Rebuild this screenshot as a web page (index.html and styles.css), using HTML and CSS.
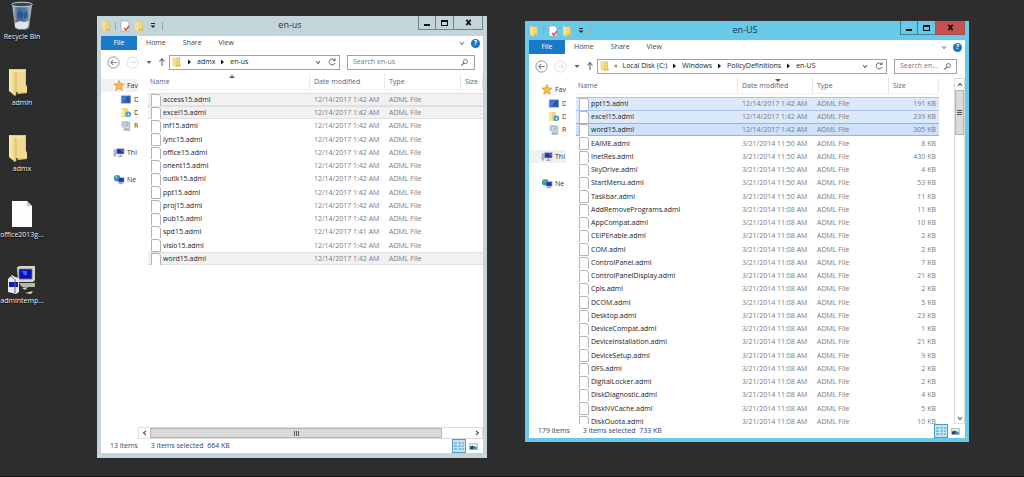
FILE: index.html
```
<!DOCTYPE html>
<html lang="en">
<head>
<meta charset="utf-8">
<title>Desktop</title>
<link rel="stylesheet" href="styles.css">
</head>
<body>
<svg class="defs" aria-hidden="true">
  <defs>
    <linearGradient id="gold" x1="0" x2="1"><stop offset="0" stop-color="#fbeeb0"/><stop offset="1" stop-color="#ecd07a"/></linearGradient>
    <linearGradient id="glass" x1="0" x2="1"><stop offset="0" stop-color="#b9c6d2"/><stop offset=".3" stop-color="#4f6680"/><stop offset=".7" stop-color="#5f7993"/><stop offset="1" stop-color="#c3ced8"/></linearGradient>
  </defs>
  <symbol id="folder" viewBox="0 0 10 12"><path d="M1 1l4 1v9l-1 .5-3-2z" fill="#f7e08c"/><path d="M5 1.500h3.500V8H9v2.500H4.500z" fill="#dfb94d"/><path d="M5 2h3v7H5z" fill="#efd77e"/></symbol>
  <symbol id="bigfolder" viewBox="0 0 20 28"><path d="M1 1h17v16l1 1v7l-9 1z" fill="#e3c978"/><path d="M3 2h14v16H3z" fill="#f6e4a4"/><path d="M1 1l7 3v23l-1 1-6-5z" fill="url(#gold)"/><path d="M8 5l9-2v15l2 1v5H8z" fill="#f0da92"/><path d="M8 4v23" stroke="#c9a755" stroke-width=".7"/></symbol>
  <symbol id="props" viewBox="0 0 10 12"><path d="M1 1h6l2 2v8H1z" fill="#fff" stroke="#97a3b0" stroke-width=".7"/><path d="M4 8l2 2 3-4" stroke="#d5543f" stroke-width="1.500" fill="none"/></symbol>
  <symbol id="star" viewBox="0 0 12 12"><path d="M6 .5l1.600 3.700 4 .3-3 2.700.9 4L6 9.100l-3.500 2.100.9-4-3-2.700 4-.3z" fill="#fbbd45" stroke="#dc8420" stroke-width=".7"/></symbol>
  <symbol id="screen" viewBox="0 0 12 12"><path d="M1 2h10v8H1z" fill="#2859b0" stroke="#7d93b5" stroke-width=".7"/><path d="M1.500 2.500h6l-4 7h-2z" fill="#3f77cf"/></symbol>
  <symbol id="down" viewBox="0 0 12 12"><path d="M1 1h7v10H1z" fill="#f0d470"/><path d="M1 1l3 1v9l-3-1z" fill="#fbe9a0"/><circle cx="8.500" cy="8" r="3" fill="#2f94cf"/><path d="M8.500 6v3M7 8l1.500 1.500L10 8" stroke="#fff" fill="none" stroke-width=".8"/></symbol>
  <symbol id="recent" viewBox="0 0 12 12"><path d="M1 1h8v2H3v3h6v5H4V8H1z" fill="#c2d2db"/><path d="M3 3h7v6H4z" fill="#e8eef1" stroke="#8298a5" stroke-width=".7"/><path d="M5 4.500h4M5 6.500h4M3 11h8" stroke="#71899a" stroke-width=".9"/></symbol>
  <symbol id="pc" viewBox="0 0 12 12"><path d="M.5 3h2v7h-2z" fill="#bcc6cc" stroke="#7a8790" stroke-width=".5"/><path d="M3.500 2h8v5.500h-8z" fill="#252cae" stroke="#8b9abd" stroke-width=".7"/><path d="M7 3h4v3z" fill="#6775e3"/><path d="M7 8h1v1.500h2v1H5v-1h2z" fill="#8796a5"/></symbol>
  <symbol id="net" viewBox="0 0 12 12"><circle cx="4" cy="4.500" r="3.500" fill="#2a92a9"/><path d="M2 2l3-1-1 3-2 2z" fill="#62c46a"/><path d="M5 4h6.500v5H5z" fill="#2633b9" stroke="#9aa8da" stroke-width=".7"/><path d="M6 10.500h4" stroke="#77859a"/></symbol>
  <symbol id="back" viewBox="0 0 14 14"><circle cx="7" cy="7" r="6" fill="#fff" stroke="currentColor"/><path d="M10.500 7H4M6.500 4.500L4 7l2.500 2.500" fill="none" stroke="currentColor" stroke-width="1.200"/></symbol>
  <symbol id="fwd" viewBox="0 0 14 14"><circle cx="7" cy="7" r="6" fill="#fff" stroke="currentColor"/><path d="M3.500 7H10M7.500 4.500L10 7 7.500 9.500" fill="none" stroke="currentColor"/></symbol>
  <symbol id="chev" viewBox="0 0 8 8"><path d="M2 3l2 2.500L6 3" fill="none" stroke="currentColor" stroke-width="1.100"/></symbol>
  <symbol id="tri" viewBox="0 0 8 8"><path d="M1.500 3h5L4 6z" fill="currentColor"/></symbol>
  <symbol id="sortmark" viewBox="0 0 6 3"><path d="M0 0h6L3 3z" fill="currentColor"/></symbol>
  <symbol id="qat" viewBox="0 0 8 8"><path d="M2 1.500h4" stroke="currentColor"/><path d="M1.500 3.500h5L4 6z" fill="currentColor"/></symbol>
  <symbol id="right" viewBox="0 0 8 8"><path d="M3 1.500v5L6 4z" fill="currentColor"/></symbol>
  <symbol id="up" viewBox="0 0 8 10"><path d="M4 9V2M1.500 4.500L4 1.500l2.500 3" fill="none" stroke="currentColor" stroke-width="1.100"/></symbol>
  <symbol id="reload" viewBox="0 0 10 10"><path d="M7.500 3A3 3 0 1 0 8 6" fill="none" stroke="currentColor"/><path d="M8.500 1v3h-3z" fill="currentColor"/></symbol>
  <symbol id="lens" viewBox="0 0 10 10"><circle cx="6" cy="4" r="2.300" fill="none" stroke="currentColor"/><path d="M4.500 5.500L1.500 8.500" stroke="currentColor" stroke-width="1.200"/></symbol>
  <symbol id="details" viewBox="0 0 12 12"><path d="M1 3h3M1 6h3M1 9h3M5.500 3H8M9 3h2M5.500 6H8M9 6h2M5.500 9H8M9 9h2" stroke="#4389b5" stroke-width=".9"/></symbol>
  <symbol id="thumbs" viewBox="0 0 10 8"><path d="M.5.5h9v7h-9z" fill="#d9eff5" stroke="#86a2ad" stroke-width=".7"/><path d="M1 4l3-1 5 2v2H1z" fill="#214c66"/><path d="M5 5h4v2H5z" fill="#58a7ad"/></symbol>
</svg>

<main class="desktop">
  <ul class="shortcuts">
    <li><svg viewBox="0 0 24 30"><path d="M2 3h20l-3 24-3 2H8l-3-2z" fill="url(#glass)"/><ellipse cx="12" cy="3.500" rx="10.500" ry="2.300" fill="#34465a" stroke="#c5d0d9"/><path d="M7 12l4-3 3 4-2 5-5-2zM14 12l3-2 1 6-4 2z" fill="#245a9c"/><path d="M5 22l5-2 4 1 5-1-1 6-3 2H8l-3-2z" fill="#dfe5ea"/></svg><span>Recycle Bin</span></li>
    <li><svg class="shifted"><use href="#bigfolder"/></svg><span>admin</span></li>
    <li><svg class="shifted"><use href="#bigfolder"/></svg><span>admx</span></li>
    <li><svg viewBox="0 0 24 30"><path d="M2 2h15l5 5v21H2z" fill="#fdfdfd"/><path d="M17 2v5h5z" fill="#c9c9c9"/></svg><span>office2013g...</span></li>
    <li><svg class="wide" viewBox="0 0 30 30"><path d="M10 2l3-1h15v14l-2 2H11z" fill="#d8d5c5"/><path d="M12 4h13v10H12z" fill="#0a12b5" stroke="#777" stroke-width=".8"/><path d="M15 6h5v4h-3z" fill="#3b62ff"/><path d="M12 18h16v4H15z" fill="#b9b7ab"/><path d="M1 14l4-4 3 2 4 1v14l-3 2-8-2z" fill="#e9e9ee"/><path d="M2 17h9v5H2z" fill="#1017c3"/><path d="M4 11l3 3M8 14v14" stroke="#686868"/><path d="M15 23l6-1-3 3zM18 28l8-2-2 3z" fill="#d8dba0"/></svg><span>admintemp...</span></li>
  </ul>

  <section class="window inactive" aria-label="en-us">
    <header class="titlebar">
      <div class="quick"><svg><use href="#folder"/></svg><i></i><svg><use href="#props"/></svg><svg><use href="#folder"/></svg><svg class="small"><use href="#qat"/></svg><i></i></div>
      <h1>en-us</h1>
      <div class="controls"><button aria-label="Minimize"><b class="min"></b></button><button aria-label="Maximize"><b class="max"></b></button><button class="close" aria-label="Close"><svg viewBox="0 0 8 8"><path d="M1.500 1L6.500 7M6.500 1L1.500 7"/></svg></button></div>
    </header>
    <div class="client">
      <div class="ribbon"><button class="file">File</button><button>Home</button><button>Share</button><button>View</button><svg class="expand"><use href="#chev"/></svg><button class="help" aria-label="Help">?</button></div>
      <div class="location">
        <button class="round" aria-label="Back"><svg><use href="#back"/></svg></button><button class="round off" aria-label="Forward"><svg><use href="#fwd"/></svg></button><button class="recent" aria-label="Recent locations"><svg><use href="#tri"/></svg></button><button class="parent" aria-label="Up"><svg><use href="#up"/></svg></button>
        <div class="address"><svg class="place"><use href="#folder"/></svg><svg class="sep"><use href="#right"/></svg><span>admx</span><svg class="sep"><use href="#right"/></svg><span>en-us</span><button aria-label="Previous locations"><svg><use href="#chev"/></svg></button><button aria-label="Refresh"><svg class="reload"><use href="#reload"/></svg></button></div>
        <label class="search"><input type="text" placeholder="Search en-us" aria-label="Search en-us"><svg><use href="#lens"/></svg></label>
      </div>
      <div class="body">
        <ul class="tree">
          <li class="lit"><svg><use href="#star"/></svg>Fav</li>
          <li class="sub"><svg><use href="#screen"/></svg>D</li>
          <li class="sub"><svg><use href="#down"/></svg>D</li>
          <li class="sub"><svg><use href="#recent"/></svg>R</li>
          <li class="group"><svg><use href="#pc"/></svg>Thi</li>
          <li class="group"><svg><use href="#net"/></svg>Ne</li>
        </ul>
        <div class="pane">
          <div class="files">
            <table>
              <colgroup><col><col class="date"><col class="type"><col class="edge"></colgroup>
              <thead><tr><th>Name<svg class="sort asc"><use href="#sortmark"/></svg></th><th>Date modified</th><th>Type</th><th>Size</th></tr></thead>
              <tbody>
                <tr class="picked"><td>access15.adml</td><td>12/14/2017 1:42 AM</td><td>ADML File</td><td></td></tr>
                <tr class="picked"><td>excel15.adml</td><td>12/14/2017 1:42 AM</td><td>ADML File</td><td></td></tr>
                <tr><td>inf15.adml</td><td>12/14/2017 1:42 AM</td><td>ADML File</td><td></td></tr>
                <tr><td>lync15.adml</td><td>12/14/2017 1:42 AM</td><td>ADML File</td><td></td></tr>
                <tr><td>office15.adml</td><td>12/14/2017 1:42 AM</td><td>ADML File</td><td></td></tr>
                <tr><td>onent15.adml</td><td>12/14/2017 1:42 AM</td><td>ADML File</td><td></td></tr>
                <tr><td>outlk15.adml</td><td>12/14/2017 1:42 AM</td><td>ADML File</td><td></td></tr>
                <tr><td>ppt15.adml</td><td>12/14/2017 1:42 AM</td><td>ADML File</td><td></td></tr>
                <tr><td>proj15.adml</td><td>12/14/2017 1:42 AM</td><td>ADML File</td><td></td></tr>
                <tr><td>pub15.adml</td><td>12/14/2017 1:42 AM</td><td>ADML File</td><td></td></tr>
                <tr><td>spd15.adml</td><td>12/14/2017 1:41 AM</td><td>ADML File</td><td></td></tr>
                <tr><td>visio15.adml</td><td>12/14/2017 1:42 AM</td><td>ADML File</td><td></td></tr>
                <tr class="picked"><td>word15.adml</td><td>12/14/2017 1:42 AM</td><td>ADML File</td><td></td></tr>
              </tbody>
            </table>
          </div>
          <div class="hscroll"><button aria-label="Scroll left"><svg class="west"><use href="#chev"/></svg></button><div class="track"><div class="thumb"><i></i><i></i><i></i></div></div><button aria-label="Scroll right"><svg class="east"><use href="#chev"/></svg></button></div>
        </div>
      </div>
      <footer class="status"><span>13 items</span><span>3 items selected&nbsp; 664 KB</span><button class="view on" aria-label="Details"><svg><use href="#details"/></svg></button><button class="view" aria-label="Thumbnails"><svg class="pic"><use href="#thumbs"/></svg></button></footer>
    </div>
  </section>

  <section class="window active" aria-label="en-US">
    <header class="titlebar">
      <div class="quick"><svg><use href="#folder"/></svg><i></i><svg><use href="#props"/></svg><svg><use href="#folder"/></svg><svg class="small"><use href="#qat"/></svg><i></i></div>
      <h1>en-US</h1>
      <div class="controls"><button aria-label="Minimize"><b class="min"></b></button><button aria-label="Maximize"><b class="max"></b></button><button class="close" aria-label="Close"><svg viewBox="0 0 8 8"><path d="M1.500 1L6.500 7M6.500 1L1.500 7"/></svg></button></div>
    </header>
    <div class="client">
      <div class="ribbon"><button class="file">File</button><button>Home</button><button>Share</button><button>View</button><svg class="expand"><use href="#chev"/></svg><button class="help" aria-label="Help">?</button></div>
      <div class="location">
        <button class="round" aria-label="Back"><svg><use href="#back"/></svg></button><button class="round off" aria-label="Forward"><svg><use href="#fwd"/></svg></button><button class="recent" aria-label="Recent locations"><svg><use href="#tri"/></svg></button><button class="parent" aria-label="Up"><svg><use href="#up"/></svg></button>
        <div class="address"><svg class="place"><use href="#folder"/></svg><span class="more">«</span><span>Local Disk (C:)</span><svg class="sep"><use href="#right"/></svg><span>Windows</span><svg class="sep"><use href="#right"/></svg><span>PolicyDefinitions</span><svg class="sep"><use href="#right"/></svg><span>en-US</span><button aria-label="Previous locations"><svg><use href="#chev"/></svg></button><button aria-label="Refresh"><svg class="reload"><use href="#reload"/></svg></button></div>
        <label class="search"><input type="text" placeholder="Search en..." aria-label="Search en-US"><svg><use href="#lens"/></svg></label>
      </div>
      <div class="body">
        <ul class="tree">
          <li><svg><use href="#star"/></svg>Fav</li>
          <li class="sub"><svg><use href="#screen"/></svg>D</li>
          <li class="sub"><svg><use href="#down"/></svg>D</li>
          <li class="sub"><svg><use href="#recent"/></svg>R</li>
          <li class="group lit"><svg><use href="#pc"/></svg>Thi</li>
          <li class="group"><svg><use href="#net"/></svg>Ne</li>
        </ul>
        <div class="pane">
          <div class="files">
            <table>
              <colgroup><col><col class="date"><col class="type"><col class="size"></colgroup>
              <thead><tr><th>Name</th><th>Date modified<svg class="sort"><use href="#sortmark"/></svg></th><th>Type</th><th>Size</th></tr></thead>
              <tbody>
                <tr class="picked"><td>ppt15.adml</td><td>12/14/2017 1:42 AM</td><td>ADML File</td><td>191 KB</td></tr>
                <tr class="picked"><td>excel15.adml</td><td>12/14/2017 1:42 AM</td><td>ADML File</td><td>239 KB</td></tr>
                <tr class="picked focus"><td>word15.adml</td><td>12/14/2017 1:42 AM</td><td>ADML File</td><td>305 KB</td></tr>
                <tr><td>EAIME.adml</td><td>3/21/2014 11:50 AM</td><td>ADML File</td><td>8 KB</td></tr>
                <tr><td>InetRes.adml</td><td>3/21/2014 11:50 AM</td><td>ADML File</td><td>430 KB</td></tr>
                <tr><td>SkyDrive.adml</td><td>3/21/2014 11:50 AM</td><td>ADML File</td><td>4 KB</td></tr>
                <tr><td>StartMenu.adml</td><td>3/21/2014 11:50 AM</td><td>ADML File</td><td>53 KB</td></tr>
                <tr><td>Taskbar.adml</td><td>3/21/2014 11:50 AM</td><td>ADML File</td><td>11 KB</td></tr>
                <tr><td>AddRemovePrograms.adml</td><td>3/21/2014 11:08 AM</td><td>ADML File</td><td>11 KB</td></tr>
                <tr><td>AppCompat.adml</td><td>3/21/2014 11:08 AM</td><td>ADML File</td><td>10 KB</td></tr>
                <tr><td>CEIPEnable.adml</td><td>3/21/2014 11:08 AM</td><td>ADML File</td><td>2 KB</td></tr>
                <tr><td>COM.adml</td><td>3/21/2014 11:08 AM</td><td>ADML File</td><td>2 KB</td></tr>
                <tr><td>ControlPanel.adml</td><td>3/21/2014 11:08 AM</td><td>ADML File</td><td>7 KB</td></tr>
                <tr><td>ControlPanelDisplay.adml</td><td>3/21/2014 11:08 AM</td><td>ADML File</td><td>21 KB</td></tr>
                <tr><td>Cpls.adml</td><td>3/21/2014 11:08 AM</td><td>ADML File</td><td>2 KB</td></tr>
                <tr><td>DCOM.adml</td><td>3/21/2014 11:08 AM</td><td>ADML File</td><td>5 KB</td></tr>
                <tr><td>Desktop.adml</td><td>3/21/2014 11:08 AM</td><td>ADML File</td><td>23 KB</td></tr>
                <tr><td>DeviceCompat.adml</td><td>3/21/2014 11:08 AM</td><td>ADML File</td><td>1 KB</td></tr>
                <tr><td>DeviceInstallation.adml</td><td>3/21/2014 11:08 AM</td><td>ADML File</td><td>21 KB</td></tr>
                <tr><td>DeviceSetup.adml</td><td>3/21/2014 11:08 AM</td><td>ADML File</td><td>9 KB</td></tr>
                <tr><td>DFS.adml</td><td>3/21/2014 11:08 AM</td><td>ADML File</td><td>2 KB</td></tr>
                <tr><td>DigitalLocker.adml</td><td>3/21/2014 11:08 AM</td><td>ADML File</td><td>2 KB</td></tr>
                <tr><td>DiskDiagnostic.adml</td><td>3/21/2014 11:08 AM</td><td>ADML File</td><td>4 KB</td></tr>
                <tr><td>DiskNVCache.adml</td><td>3/21/2014 11:08 AM</td><td>ADML File</td><td>5 KB</td></tr>
                <tr><td>DiskQuota.adml</td><td>3/21/2014 11:08 AM</td><td>ADML File</td><td>10 KB</td></tr>
              </tbody>
            </table>
          </div>
        </div>
        <div class="vscroll"><button aria-label="Scroll up"><svg class="north"><use href="#chev"/></svg></button><div class="track"><div class="thumb"><i></i><i></i><i></i></div></div><button aria-label="Scroll down"><svg><use href="#chev"/></svg></button></div>
      </div>
      <footer class="status"><span>179 items</span><span>3 items selected&nbsp; 733 KB</span><button class="view on" aria-label="Details"><svg><use href="#details"/></svg></button><button class="view" aria-label="Thumbnails"><svg class="pic"><use href="#thumbs"/></svg></button></footer>
    </div>
  </section>
</main>
</body>
</html>
```
FILE: styles.css
```
* { box-sizing: border-box; }
html, body { height: 100%; }
body { margin: 0; background: #2d2d2d; font: 7px/12px "Open Sans", "Noto Sans", sans-serif; color: #222; }
ul { list-style: none; margin: 0; padding: 0; }
button { font: inherit; color: inherit; background: none; border: 0; padding: 0; display: flex; align-items: center; justify-content: center; }
svg { display: block; flex: none; width: 8px; height: 8px; }
.defs { position: absolute; width: 0; height: 0; }
.desktop { position: relative; height: 100%; overflow: hidden; border-bottom: 1px solid #151515; }

/* desktop shortcuts */
.shortcuts { display: flex; flex-direction: column; gap: 24px; width: 44px; padding-top: 1px; }
.shortcuts li { display: flex; flex-direction: column; align-items: center; color: #f4f4f4; white-space: nowrap; text-shadow: 0 1px 1px #000; }
.shortcuts svg { width: 24px; height: 30px; }
.shortcuts .wide { width: 30px; }
.shortcuts .shifted { width: 20px; margin-right: 8px; }

/* window frame */
.window { position: absolute; display: flex; flex-direction: column; padding: 0 4px 4px; }
.inactive { inset: 16px 537px 18px 97px; background: #c3d5db; padding: 0 4px 5px; }
.active { inset: 21px 55px 34px 525px; background: #68c9e8; }
.titlebar { display: flex; justify-content: space-between; height: 20px; flex: none; position: relative; }
.active .titlebar { height: 19px; }
.titlebar h1 { position: absolute; inset: 0 4px 0 0; margin: 0; text-align: center; font-size: 9px; font-weight: 400; line-height: 18px; color: #22343c; }
.quick { display: flex; align-items: center; gap: 4px; }
.quick svg { width: 10px; height: 12px; }
.quick .small { width: 8px; height: 8px; margin: 0 1px; }
.quick i { width: 1px; height: 8px; background: #8fa8b2; }
.controls { display: flex; height: 14px; position: relative; }
.controls button { width: 18px; border: 1px solid #6f858e; border-top: 0; border-left-width: 0; }
.controls button:first-child { border-left-width: 1px; }
.controls .close { width: 29px; }
.controls svg { width: 7px; height: 7px; fill: none; stroke: #111; stroke-width: 2; }
.active .controls button { border-color: #3f8296; }
.active .controls .close { background: #c75050; border-color: #9c5555; }
.min { width: 6px; height: 2px; background: #111; margin-top: 4px; }
.max { width: 7px; height: 6px; border: 1px solid #111; border-width: 2px 1px 1px; }
.client { flex: 1; min-height: 0; display: flex; flex-direction: column; background: #fff; }

/* ribbon tabs */
.ribbon { display: flex; height: 14px; flex: none; padding-right: 3px; color: #444; align-items: center; gap: 17px; }
.ribbon .file { width: 36px; align-self: stretch; background: #1979ca; color: #fff; margin-right: -8px; }
.expand { margin-left: auto; color: #7a8994; }
.ribbon .help { width: 9px; height: 9px; border-radius: 50%; background: #1a72c9; color: #fff; font-weight: 700; margin-left: -12px; }

/* address row */
.location { display: flex; align-items: center; height: 24px; flex: none; padding: 0 8px 0 6px; color: #666; }
.round svg { width: 13px; height: 13px; color: #888; }
.round { margin-right: 6px; }
.round.off svg { color: #ddd; }
.recent { margin-right: 5px; }
.parent { margin-right: 3px; }
.parent svg { height: 10px; }
.address, .search { display: flex; align-items: center; height: 15px; border: 1px solid #a0a0a8; background: #fff; }
.address { flex: 1; min-width: 0; padding: 0 2px 0 1px; color: #222; white-space: nowrap; }
.place { width: 11px; height: 12px; }
.sep { margin: 0 4px 0 3px; color: #111; }
.more { margin: 0 5px 0 4px; }
.address button { margin-left: 5px; color: #666; }
.address span + button { margin-left: auto; }
.address .reload { width: 10px; height: 10px; }
.search { width: 128px; margin-left: 7px; padding: 0 5px; color: #666; }
.active .search { width: 63px; padding: 0 4px 0 5px; }
.search input { flex: 1; min-width: 0; border: 0; padding: 0; font: inherit; outline: 0; background: none; }
.search input::placeholder { color: #777; opacity: 1; }
.search svg { width: 9px; height: 9px; }

/* folder tree */
.body { flex: 1; min-height: 0; display: flex; }
.tree { width: 37px; flex: none; overflow: hidden; padding-top: 5px; white-space: nowrap; color: #333; }
.tree li { display: flex; align-items: center; gap: 2px; height: 13px; padding-left: 12px; margin-bottom: 1px; }
.tree .sub { padding-left: 19px; margin-bottom: 0; }
.tree .group { margin-top: 14px; margin-bottom: 0; }
.tree svg { width: 12px; height: 11px; }
.lit { background: #f1f1f1; }

/* file list */
.pane { flex: 1; min-width: 0; display: flex; flex-direction: column; }
.files { flex: 1; min-height: 0; overflow: hidden; padding-left: 10px; }
.active .files { padding-right: 15px; }
table { width: 100%; table-layout: fixed; border-collapse: separate; border-spacing: 0; white-space: nowrap; line-height: 11px; }
.date { width: 75px; }
.type { width: 76px; }
.size { width: 50px; }
.edge { width: 22px; }
th, td { padding: 0 3px 0 4px; text-align: left; font-weight: 400; overflow: hidden; }
th { position: relative; height: 16px; color: #536482; border-bottom: 1px solid #f0f0f0; border-right: 1px solid #e6e8ec; }
th:first-child { padding-left: 2px; }
th:last-child { padding: 0 0 0 4px; }
thead::after { content: ""; display: block; height: 3px; }
.sort { position: absolute; top: 1px; left: 50%; height: 3px; width: 6px; color: #555; }
.asc { transform: rotate(180deg); }
td { height: 13px; color: #7b7b7b; }
tr:nth-child(4n) td { height: 14px; }
td:first-child { position: relative; padding-left: 15px; color: #222; }
td:first-child::before { content: ""; position: absolute; left: 3px; top: 1px; width: 8px; height: 11px; border: 1px solid #b4b4b4; border-radius: 0 3px 0 0; background: #fff; }
td:last-child { text-align: right; }
.picked td { background: #f1f1f1; box-shadow: inset 0 1px #e0e0e0, inset 0 -1px #e0e0e0; }
.active .picked td { background: #dce9fb; box-shadow: inset 0 1px #a5c6ec; }
.active .focus td { background: #cde1fb; box-shadow: inset 0 1px #8bb5e4, inset 0 -1px #8bb5e4; }

/* scroll bars */
.hscroll { display: flex; height: 12px; flex: none; border: 1px solid #dcdcdc; color: #555; }
.hscroll button { width: 11px; }
.hscroll .track { flex: 1; }
.hscroll .thumb { width: 91%; height: 100%; }
.thumb { display: flex; align-items: center; justify-content: center; gap: 1px; background: #dadada; border: 1px solid #b5b5b5; }
.hscroll i { width: 1px; height: 5px; background: #555; }
.vscroll { display: flex; flex-direction: column; width: 11px; flex: none; border: 1px solid #dcdcdc; color: #555; }
.vscroll button { height: 11px; }
.vscroll .track { flex: 1; }
.vscroll .thumb { height: 14%; flex-direction: column; }
.vscroll i { width: 5px; height: 1px; background: #555; }
.west { transform: rotate(90deg); }
.east { transform: rotate(-90deg); }
.north { transform: rotate(180deg); }

/* status bar */
.status { display: flex; align-items: center; height: 14px; flex: none; padding: 0 3px 0 9px; color: #35446b; }
.status span { margin-right: 13px; }
.view { width: 14px; height: 14px; }
.view svg { width: 12px; height: 12px; }
.view .pic { width: 9px; height: 7px; }
.view.on { margin-left: auto; background: #c3e4f4; border: 1px solid #4d9cc6; }
```
